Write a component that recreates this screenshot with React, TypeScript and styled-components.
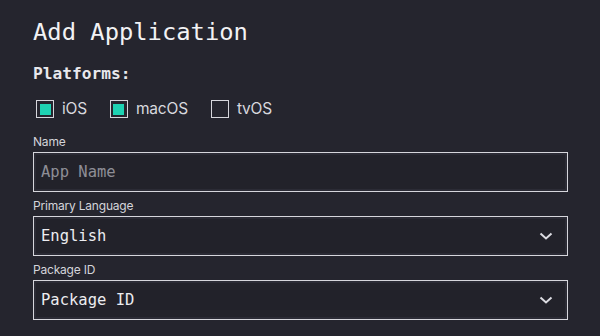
import React from "react";
import styled, { createGlobalStyle } from "styled-components";

const Global = createGlobalStyle`
  html, body { margin: 0; padding: 0; background: #25252e; }
  body { width: 600px; height: 336px; overflow: hidden; }
`;

const Page = styled.div`
  padding: 14px 32px 0 33px;
  display: flex;
  flex-direction: column;
  font-family: "Inter", "Liberation Sans", sans-serif;
  color: #e6e6ea;
`;

const Title = styled.h1`
  margin: 0;
  font-family: "DejaVu Sans Mono", "Liberation Mono", monospace;
  font-weight: 400;
  font-size: 23.8px;
  line-height: 36px;
  color: #f2f2f4;
`;

const SectionLabel = styled.div`
  margin-top: 14px;
  font-family: "DejaVu Sans Mono", "Liberation Mono", monospace;
  font-weight: 700;
  font-size: 16.2px;
  line-height: 20px;
  color: #e8e8ec;
`;

const CheckRow = styled.div`
  display: flex;
  gap: 23px;
  margin-top: 13px;
  padding-left: 3px;
`;

const CheckItem = styled.label`
  display: flex;
  align-items: center;
  gap: 8px;
  font-size: 15.5px;
  line-height: 24px;
  color: #d8d8de;
  letter-spacing: -0.2px;
`;

const Box = styled.span<{ $checked: boolean }>`
  box-sizing: border-box;
  width: 18px;
  height: 18px;
  border: 1.5px solid #d6d6dc;
  display: flex;
  align-items: center;
  justify-content: center;
  &::after {
    content: "";
    width: 11px;
    height: 11px;
    background: ${(p) => (p.$checked ? "#1ed3b3" : "transparent")};
  }
`;

const FieldLabel = styled.div<{ $first?: boolean }>`
  margin-top: ${(p) => (p.$first ? "13px" : "6px")};
  font-size: 12px;
  line-height: 16px;
  color: #d4d4da;
  letter-spacing: -0.2px;
`;

const Control = styled.div<{ $placeholder?: boolean }>`
  box-sizing: border-box;
  margin-top: 2px;
  height: 40px;
  border: 1.5px solid #d6d6dc;
  box-shadow: inset 0 0 0 2px #2b2b35;
  background: #22222a;
  display: flex;
  align-items: center;
  justify-content: space-between;
  padding: 0 14px 0 7px;
  font-family: "DejaVu Sans Mono", "Liberation Mono", monospace;
  font-size: 15.5px;
  color: ${(p) => (p.$placeholder ? "#8e8e96" : "#ececf0")};
`;

const Chevron = () => (
  <svg width="14" height="10" viewBox="0 0 14 10">
    <path d="M1.5 2.5 L7 7.5 L12.5 2.5" fill="none" stroke="#dcdce2" strokeWidth="2" />
  </svg>
);

export default function App() {
  return (
    <Page>
      <Global />
      <Title>Add Application</Title>
      <SectionLabel>Platforms:</SectionLabel>
      <CheckRow>
        <CheckItem><Box $checked />iOS</CheckItem>
        <CheckItem><Box $checked />macOS</CheckItem>
        <CheckItem><Box $checked={false} />tvOS</CheckItem>
      </CheckRow>
      <FieldLabel $first>Name</FieldLabel>
      <Control $placeholder>App Name</Control>
      <FieldLabel>Primary Language</FieldLabel>
      <Control>English<Chevron /></Control>
      <FieldLabel>Package ID</FieldLabel>
      <Control>Package ID<Chevron /></Control>
    </Page>
  );
}
